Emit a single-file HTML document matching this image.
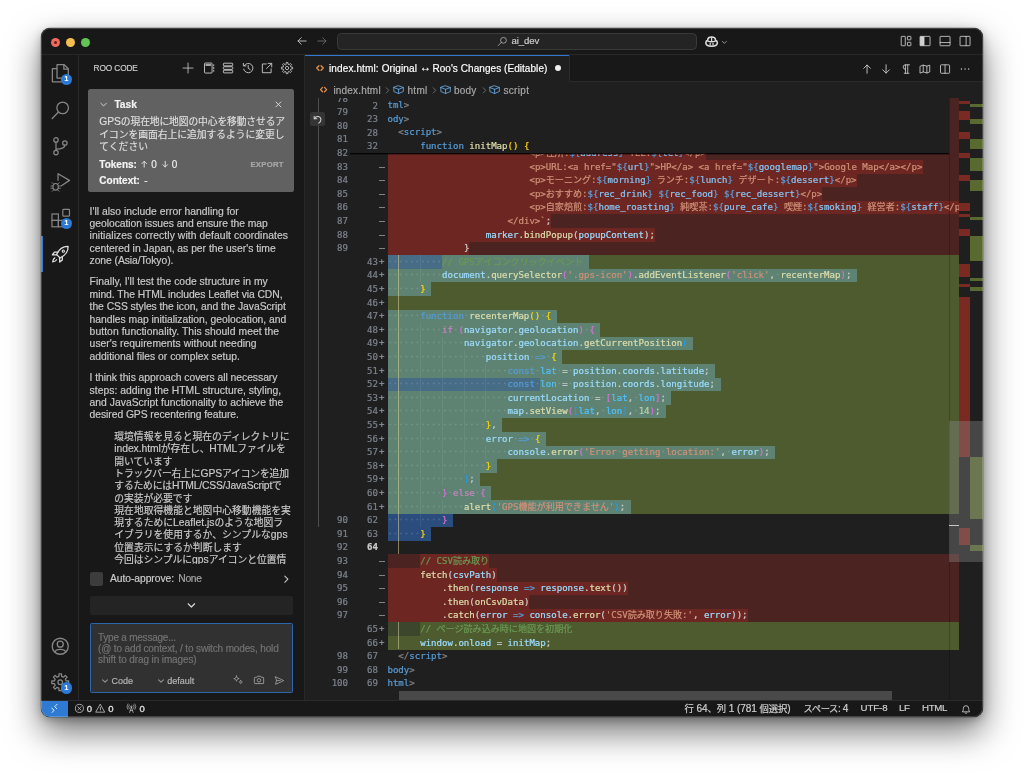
<!DOCTYPE html>
<html lang="ja"><head><meta charset="utf-8"><title>ai_dev</title>
<style>
html,body{margin:0;padding:0}
body{width:1024px;height:773px;overflow:hidden;background:#fff;position:relative;font-family:"Liberation Sans","Noto Sans CJK JP",sans-serif;color:#ccc}
#win{position:absolute;left:41px;top:28px;width:942px;height:689px;border-radius:9px;background:#1f1f1f;overflow:hidden;box-shadow:0 0 0 0.4px rgba(0,0,0,.35),0 15px 34px rgba(0,0,0,.55),0 3px 10px rgba(0,0,0,.25)}
#win::after{content:'';position:absolute;left:0;top:0;right:0;bottom:0;border-radius:9px;box-shadow:inset 0 0 0 1px rgba(255,255,255,.19);pointer-events:none;z-index:9}
#pg{position:absolute;left:-41px;top:-28px;width:1024px;height:773px;will-change:transform}
#pg div,#pg svg{position:absolute}
.t{white-space:pre}
.ui{font-family:"Liberation Sans","Noto Sans CJK JP",sans-serif;-webkit-text-stroke:0.18px}
.code{font-family:"DejaVu Sans Mono","Noto Sans CJK JP",monospace;font-size:9.07px;white-space:pre;line-height:13.6px;height:13.6px;color:#ccc;-webkit-text-stroke:0.22px}
.ln{font-family:"DejaVu Sans Mono",monospace;font-size:9.07px;line-height:13.6px;height:13.6px;color:#7b828c;text-align:right;white-space:pre;-webkit-text-stroke:0.22px}
svg{overflow:visible}
.ic{fill:none;stroke:#c5c5c5;stroke-width:1;stroke-linecap:round;stroke-linejoin:round}
</style></head><body>
<div id="win"><div id="pg">
<div style="left:41.00px;top:28.00px;width:942.00px;height:26.40px;background:#181818;"></div>
<div style="left:41.00px;top:54.20px;width:942.00px;height:0.80px;background:#282828;"></div>
<div style="left:41.00px;top:55.00px;width:37.00px;height:646.00px;background:#181818;"></div>
<div style="left:78.00px;top:55.00px;width:0.80px;height:646.00px;background:#282828;"></div>
<div style="left:78.80px;top:55.00px;width:225.20px;height:646.00px;background:#181818;"></div>
<div style="left:304.00px;top:55.00px;width:0.80px;height:646.00px;background:#282828;"></div>
<div style="left:304.80px;top:55.00px;width:678.20px;height:26.00px;background:#181818;"></div>
<div style="left:304.80px;top:80.80px;width:678.20px;height:0.80px;background:#2b2b2b;"></div>
<div style="left:304.80px;top:55.00px;width:264.50px;height:26.60px;background:#1f1f1f;"></div>
<div style="left:304.80px;top:54.90px;width:264.50px;height:1.10px;background:#2f79d0;"></div>
<div style="left:569.30px;top:55.00px;width:0.80px;height:26.00px;background:#2b2b2b;"></div>
<div id="ed" style="left:304.8px;top:98px;width:678.2px;height:602.6px;overflow:hidden;background:#1f1f1f"><div style="left:-304.8px;top:-98px;width:1024px;height:773px">
<div style="left:388.20px;top:91.90px;width:570.80px;height:13.70px;background:#4b2321;"></div>
<div style="left:388.20px;top:105.50px;width:570.80px;height:13.70px;background:#4b2321;"></div>
<div style="left:388.20px;top:119.10px;width:570.80px;height:13.70px;background:#4b2321;"></div>
<div style="left:388.20px;top:132.70px;width:570.80px;height:13.70px;background:#4b2321;"></div>
<div style="left:388.20px;top:146.30px;width:570.80px;height:13.70px;background:#4b2321;"></div>
<div style="left:388.20px;top:146.30px;width:317.77px;height:13.70px;background:#6d2621;"></div>
<div style="left:388.20px;top:159.90px;width:570.80px;height:13.70px;background:#4b2321;"></div>
<div style="left:388.20px;top:159.90px;width:534.50px;height:13.70px;background:#6d2621;"></div>
<div style="left:388.20px;top:173.50px;width:570.80px;height:13.70px;background:#4b2321;"></div>
<div style="left:388.20px;top:173.50px;width:468.56px;height:13.70px;background:#6d2621;"></div>
<div style="left:388.20px;top:187.10px;width:570.80px;height:13.70px;background:#4b2321;"></div>
<div style="left:388.20px;top:187.10px;width:434.23px;height:13.70px;background:#6d2621;"></div>
<div style="left:388.20px;top:200.70px;width:570.80px;height:13.70px;background:#4b2321;"></div>
<div style="left:388.20px;top:200.70px;width:570.80px;height:13.70px;background:#6d2621;"></div>
<div style="left:388.20px;top:214.30px;width:570.80px;height:13.70px;background:#4b2321;"></div>
<div style="left:388.20px;top:214.30px;width:163.08px;height:13.70px;background:#6d2621;"></div>
<div style="left:388.20px;top:227.90px;width:570.80px;height:13.70px;background:#4b2321;"></div>
<div style="left:388.20px;top:227.90px;width:266.86px;height:13.70px;background:#6d2621;"></div>
<div style="left:388.20px;top:241.50px;width:570.80px;height:13.70px;background:#4b2321;"></div>
<div style="left:388.20px;top:241.50px;width:81.15px;height:13.70px;background:#6d2621;"></div>
<div style="left:388.20px;top:255.10px;width:570.80px;height:13.70px;background:#4e5b2f;"></div>
<div style="left:388.20px;top:255.10px;width:200.92px;height:13.70px;background:#5e8372;"></div>
<div style="left:388.20px;top:255.10px;width:53.84px;height:13.70px;background:#466c86;"></div>
<div style="left:388.20px;top:268.70px;width:570.80px;height:13.70px;background:#4e5b2f;"></div>
<div style="left:388.20px;top:268.70px;width:468.96px;height:13.70px;background:#5e8372;"></div>
<div style="left:388.20px;top:282.30px;width:570.80px;height:13.70px;background:#4e5b2f;"></div>
<div style="left:388.20px;top:282.30px;width:42.92px;height:13.70px;background:#5e8372;"></div>
<div style="left:388.20px;top:295.90px;width:570.80px;height:13.70px;background:#4e5b2f;"></div>
<div style="left:388.20px;top:309.50px;width:570.80px;height:13.70px;background:#4e5b2f;"></div>
<div style="left:388.20px;top:309.50px;width:168.55px;height:13.70px;background:#5e8372;"></div>
<div style="left:388.20px;top:323.10px;width:570.80px;height:13.70px;background:#4e5b2f;"></div>
<div style="left:388.20px;top:323.10px;width:212.24px;height:13.70px;background:#5e8372;"></div>
<div style="left:388.20px;top:336.70px;width:570.80px;height:13.70px;background:#4e5b2f;"></div>
<div style="left:388.20px;top:336.70px;width:305.10px;height:13.70px;background:#5e8372;"></div>
<div style="left:388.20px;top:350.30px;width:570.80px;height:13.70px;background:#4e5b2f;"></div>
<div style="left:388.20px;top:350.30px;width:174.01px;height:13.70px;background:#5e8372;"></div>
<div style="left:388.20px;top:363.90px;width:570.80px;height:13.70px;background:#4e5b2f;"></div>
<div style="left:388.20px;top:363.90px;width:326.94px;height:13.70px;background:#5e8372;"></div>
<div style="left:388.20px;top:377.50px;width:570.80px;height:13.70px;background:#4e5b2f;"></div>
<div style="left:388.20px;top:377.50px;width:332.41px;height:13.70px;background:#5e8372;"></div>
<div style="left:388.20px;top:377.50px;width:152.16px;height:13.70px;background:#466c86;"></div>
<div style="left:388.20px;top:391.10px;width:570.80px;height:13.70px;background:#4e5b2f;"></div>
<div style="left:388.20px;top:391.10px;width:283.25px;height:13.70px;background:#5e8372;"></div>
<div style="left:388.20px;top:404.70px;width:570.80px;height:13.70px;background:#4e5b2f;"></div>
<div style="left:388.20px;top:404.70px;width:277.79px;height:13.70px;background:#5e8372;"></div>
<div style="left:388.20px;top:418.30px;width:570.80px;height:13.70px;background:#4e5b2f;"></div>
<div style="left:388.20px;top:418.30px;width:113.93px;height:13.70px;background:#5e8372;"></div>
<div style="left:388.20px;top:431.90px;width:570.80px;height:13.70px;background:#4e5b2f;"></div>
<div style="left:388.20px;top:431.90px;width:157.62px;height:13.70px;background:#5e8372;"></div>
<div style="left:388.20px;top:445.50px;width:570.80px;height:13.70px;background:#4e5b2f;"></div>
<div style="left:388.20px;top:445.50px;width:387.03px;height:13.70px;background:#5e8372;"></div>
<div style="left:388.20px;top:459.10px;width:570.80px;height:13.70px;background:#4e5b2f;"></div>
<div style="left:388.20px;top:459.10px;width:108.46px;height:13.70px;background:#5e8372;"></div>
<div style="left:388.20px;top:472.70px;width:570.80px;height:13.70px;background:#4e5b2f;"></div>
<div style="left:388.20px;top:472.70px;width:92.08px;height:13.70px;background:#5e8372;"></div>
<div style="left:388.20px;top:486.30px;width:570.80px;height:13.70px;background:#4e5b2f;"></div>
<div style="left:388.20px;top:486.30px;width:103.00px;height:13.70px;background:#5e8372;"></div>
<div style="left:388.20px;top:499.90px;width:570.80px;height:13.70px;background:#4e5b2f;"></div>
<div style="left:388.20px;top:499.90px;width:242.86px;height:13.70px;background:#5e8372;"></div>
<div style="left:388.20px;top:513.50px;width:64.77px;height:13.70px;background:#2a4d7e;"></div>
<div style="left:388.20px;top:527.10px;width:42.92px;height:13.70px;background:#2a4d7e;"></div>
<div style="left:388.20px;top:554.30px;width:570.80px;height:13.70px;background:#4b2321;"></div>
<div style="left:420.20px;top:554.30px;width:69.05px;height:13.70px;background:#6d2621;"></div>
<div style="left:388.20px;top:567.90px;width:570.80px;height:13.70px;background:#4b2321;"></div>
<div style="left:388.20px;top:567.90px;width:108.46px;height:13.70px;background:#6d2621;"></div>
<div style="left:388.20px;top:581.50px;width:570.80px;height:13.70px;background:#4b2321;"></div>
<div style="left:388.20px;top:581.50px;width:239.55px;height:13.70px;background:#6d2621;"></div>
<div style="left:388.20px;top:595.10px;width:570.80px;height:13.70px;background:#4b2321;"></div>
<div style="left:388.20px;top:595.10px;width:141.24px;height:13.70px;background:#6d2621;"></div>
<div style="left:388.20px;top:608.70px;width:570.80px;height:13.70px;background:#4b2321;"></div>
<div style="left:388.20px;top:608.70px;width:359.52px;height:13.70px;background:#6d2621;"></div>
<div style="left:388.20px;top:622.30px;width:570.80px;height:13.70px;background:#3b462c;"></div>
<div style="left:420.20px;top:622.30px;width:538.80px;height:13.70px;background:#4e5b2f;"></div>
<div style="left:388.20px;top:635.90px;width:570.80px;height:13.70px;background:#4e5b2f;"></div>
<div style="left:419.90px;top:255.10px;width:0.70px;height:13.60px;background:rgba(255,255,255,.07);"></div>
<div style="left:419.90px;top:268.70px;width:0.70px;height:13.60px;background:rgba(255,255,255,.07);"></div>
<div style="left:419.90px;top:323.10px;width:0.70px;height:13.60px;background:rgba(255,255,255,.07);"></div>
<div style="left:419.90px;top:336.70px;width:0.70px;height:13.60px;background:rgba(255,255,255,.07);"></div>
<div style="left:441.74px;top:336.70px;width:0.70px;height:13.60px;background:rgba(255,255,255,.07);"></div>
<div style="left:419.90px;top:350.30px;width:0.70px;height:13.60px;background:rgba(255,255,255,.07);"></div>
<div style="left:441.74px;top:350.30px;width:0.70px;height:13.60px;background:rgba(255,255,255,.07);"></div>
<div style="left:463.59px;top:350.30px;width:0.70px;height:13.60px;background:rgba(255,255,255,.07);"></div>
<div style="left:419.90px;top:363.90px;width:0.70px;height:13.60px;background:rgba(255,255,255,.07);"></div>
<div style="left:441.74px;top:363.90px;width:0.70px;height:13.60px;background:rgba(255,255,255,.07);"></div>
<div style="left:463.59px;top:363.90px;width:0.70px;height:13.60px;background:rgba(255,255,255,.07);"></div>
<div style="left:485.44px;top:363.90px;width:0.70px;height:13.60px;background:rgba(255,255,255,.07);"></div>
<div style="left:419.90px;top:377.50px;width:0.70px;height:13.60px;background:rgba(255,255,255,.07);"></div>
<div style="left:441.74px;top:377.50px;width:0.70px;height:13.60px;background:rgba(255,255,255,.07);"></div>
<div style="left:463.59px;top:377.50px;width:0.70px;height:13.60px;background:rgba(255,255,255,.07);"></div>
<div style="left:485.44px;top:377.50px;width:0.70px;height:13.60px;background:rgba(255,255,255,.07);"></div>
<div style="left:419.90px;top:391.10px;width:0.70px;height:13.60px;background:rgba(255,255,255,.07);"></div>
<div style="left:441.74px;top:391.10px;width:0.70px;height:13.60px;background:rgba(255,255,255,.07);"></div>
<div style="left:463.59px;top:391.10px;width:0.70px;height:13.60px;background:rgba(255,255,255,.07);"></div>
<div style="left:485.44px;top:391.10px;width:0.70px;height:13.60px;background:rgba(255,255,255,.07);"></div>
<div style="left:419.90px;top:404.70px;width:0.70px;height:13.60px;background:rgba(255,255,255,.07);"></div>
<div style="left:441.74px;top:404.70px;width:0.70px;height:13.60px;background:rgba(255,255,255,.07);"></div>
<div style="left:463.59px;top:404.70px;width:0.70px;height:13.60px;background:rgba(255,255,255,.07);"></div>
<div style="left:485.44px;top:404.70px;width:0.70px;height:13.60px;background:rgba(255,255,255,.07);"></div>
<div style="left:419.90px;top:418.30px;width:0.70px;height:13.60px;background:rgba(255,255,255,.07);"></div>
<div style="left:441.74px;top:418.30px;width:0.70px;height:13.60px;background:rgba(255,255,255,.07);"></div>
<div style="left:463.59px;top:418.30px;width:0.70px;height:13.60px;background:rgba(255,255,255,.07);"></div>
<div style="left:419.90px;top:431.90px;width:0.70px;height:13.60px;background:rgba(255,255,255,.07);"></div>
<div style="left:441.74px;top:431.90px;width:0.70px;height:13.60px;background:rgba(255,255,255,.07);"></div>
<div style="left:463.59px;top:431.90px;width:0.70px;height:13.60px;background:rgba(255,255,255,.07);"></div>
<div style="left:419.90px;top:445.50px;width:0.70px;height:13.60px;background:rgba(255,255,255,.07);"></div>
<div style="left:441.74px;top:445.50px;width:0.70px;height:13.60px;background:rgba(255,255,255,.07);"></div>
<div style="left:463.59px;top:445.50px;width:0.70px;height:13.60px;background:rgba(255,255,255,.07);"></div>
<div style="left:485.44px;top:445.50px;width:0.70px;height:13.60px;background:rgba(255,255,255,.07);"></div>
<div style="left:419.90px;top:459.10px;width:0.70px;height:13.60px;background:rgba(255,255,255,.07);"></div>
<div style="left:441.74px;top:459.10px;width:0.70px;height:13.60px;background:rgba(255,255,255,.07);"></div>
<div style="left:463.59px;top:459.10px;width:0.70px;height:13.60px;background:rgba(255,255,255,.07);"></div>
<div style="left:419.90px;top:472.70px;width:0.70px;height:13.60px;background:rgba(255,255,255,.07);"></div>
<div style="left:441.74px;top:472.70px;width:0.70px;height:13.60px;background:rgba(255,255,255,.07);"></div>
<div style="left:419.90px;top:486.30px;width:0.70px;height:13.60px;background:rgba(255,255,255,.07);"></div>
<div style="left:419.90px;top:499.90px;width:0.70px;height:13.60px;background:rgba(255,255,255,.07);"></div>
<div style="left:441.74px;top:499.90px;width:0.70px;height:13.60px;background:rgba(255,255,255,.07);"></div>
<div style="left:419.90px;top:513.50px;width:0.70px;height:13.60px;background:rgba(255,255,255,.07);"></div>
<div style="left:397.95px;top:255.10px;width:0.90px;height:299.20px;background:rgba(222,205,150,.55);"></div>
<div style="left:397.95px;top:622.30px;width:0.90px;height:27.20px;background:rgba(222,215,170,.5);"></div>
<div style="left:388.2px;top:98px;width:570.8px;height:602.6px;overflow:hidden"><div id="codetext" style="left:-388.2px;top:-98px;width:1024px;height:773px"><div class="code" style="left:529.44px;top:146.90px"><span style="color:#ce9178">&lt;p&gt;住所:</span><span style="color:#5b9fdc">${</span><span style="color:#86c3f2">address</span><span style="color:#5b9fdc">}</span><span style="color:#ce9178"> TEL:</span><span style="color:#5b9fdc">${</span><span style="color:#86c3f2">tel</span><span style="color:#5b9fdc">}</span><span style="color:#ce9178">&lt;/p&gt;</span></div>
<div class="code" style="left:529.44px;top:160.50px"><span style="color:#ce9178">&lt;p&gt;URL:&lt;a href="</span><span style="color:#5b9fdc">${</span><span style="color:#86c3f2">url</span><span style="color:#5b9fdc">}</span><span style="color:#ce9178">"&gt;HP&lt;/a&gt; &lt;a href="</span><span style="color:#5b9fdc">${</span><span style="color:#86c3f2">googlemap</span><span style="color:#5b9fdc">}</span><span style="color:#ce9178">"&gt;Google Map&lt;/a&gt;&lt;/p&gt;</span></div>
<div class="code" style="left:529.44px;top:174.10px"><span style="color:#ce9178">&lt;p&gt;モーニング:</span><span style="color:#5b9fdc">${</span><span style="color:#86c3f2">morning</span><span style="color:#5b9fdc">}</span><span style="color:#ce9178"> ランチ:</span><span style="color:#5b9fdc">${</span><span style="color:#86c3f2">lunch</span><span style="color:#5b9fdc">}</span><span style="color:#ce9178"> デザート:</span><span style="color:#5b9fdc">${</span><span style="color:#86c3f2">dessert</span><span style="color:#5b9fdc">}</span><span style="color:#ce9178">&lt;/p&gt;</span></div>
<div class="code" style="left:529.44px;top:187.70px"><span style="color:#ce9178">&lt;p&gt;おすすめ:</span><span style="color:#5b9fdc">${</span><span style="color:#86c3f2">rec_drink</span><span style="color:#5b9fdc">}</span><span style="color:#ce9178"> </span><span style="color:#5b9fdc">${</span><span style="color:#86c3f2">rec_food</span><span style="color:#5b9fdc">}</span><span style="color:#ce9178"> </span><span style="color:#5b9fdc">${</span><span style="color:#86c3f2">rec_dessert</span><span style="color:#5b9fdc">}</span><span style="color:#ce9178">&lt;/p&gt;</span></div>
<div class="code" style="left:529.44px;top:201.30px"><span style="color:#ce9178">&lt;p&gt;自家焙煎:</span><span style="color:#5b9fdc">${</span><span style="color:#86c3f2">home_roasting</span><span style="color:#5b9fdc">}</span><span style="color:#ce9178"> 純喫茶:</span><span style="color:#5b9fdc">${</span><span style="color:#86c3f2">pure_cafe</span><span style="color:#5b9fdc">}</span><span style="color:#ce9178"> 喫煙:</span><span style="color:#5b9fdc">${</span><span style="color:#86c3f2">smoking</span><span style="color:#5b9fdc">}</span><span style="color:#ce9178"> 経営者:</span><span style="color:#5b9fdc">${</span><span style="color:#86c3f2">staff</span><span style="color:#5b9fdc">}</span><span style="color:#ce9178">&lt;/p&gt;</span></div>
<div class="code" style="left:507.59px;top:214.90px"><span style="color:#ce9178">&lt;/div&gt;`</span><span style="color:#cccccc">;</span></div>
<div class="code" style="left:485.74px;top:228.50px"><span style="color:#9cdcfe">marker</span><span style="color:#cccccc">.</span><span style="color:#dcdcaa">bindPopup</span><span style="color:#cccccc">(</span><span style="color:#9cdcfe">popupContent</span><span style="color:#cccccc">)</span><span style="color:#cccccc">;</span></div>
<div class="code" style="left:463.89px;top:242.10px"><span style="color:#cccccc">}</span></div>
<div class="code" style="left:387.42px;top:255.70px;color:rgba(255,255,255,.15)">··········</div>
<div class="code" style="left:442.04px;top:255.70px"><span style="color:#6a9955">// GPSアイコンクリックイベント</span></div>
<div class="code" style="left:387.42px;top:269.30px;color:rgba(255,255,255,.15)">··········</div>
<div class="code" style="left:442.04px;top:269.30px"><span style="color:#9cdcfe">document</span><span style="color:#cccccc">.</span><span style="color:#dcdcaa">querySelector</span><span style="color:#da70d6">(</span><span style="color:#ce9178">'.gps-icon'</span><span style="color:#da70d6">)</span><span style="color:#cccccc">.</span><span style="color:#dcdcaa">addEventListener</span><span style="color:#da70d6">(</span><span style="color:#ce9178">'click'</span><span style="color:#cccccc">,</span><span style="color:rgba(255,255,255,.15)">·</span><span style="color:#dcdcaa">recenterMap</span><span style="color:#da70d6">)</span><span style="color:#cccccc">;</span></div>
<div class="code" style="left:387.42px;top:282.90px;color:rgba(255,255,255,.15)">······</div>
<div class="code" style="left:420.20px;top:282.90px"><span style="color:#ffd700">}</span></div>
<div class="code" style="left:387.42px;top:310.10px;color:rgba(255,255,255,.15)">······</div>
<div class="code" style="left:420.20px;top:310.10px"><span style="color:#569cd6">function</span><span style="color:rgba(255,255,255,.15)">·</span><span style="color:#dcdcaa">recenterMap</span><span style="color:#ffd700">()</span><span style="color:rgba(255,255,255,.15)">·</span><span style="color:#ffd700">{</span></div>
<div class="code" style="left:387.42px;top:323.70px;color:rgba(255,255,255,.15)">··········</div>
<div class="code" style="left:442.04px;top:323.70px"><span style="color:#c586c0">if</span><span style="color:rgba(255,255,255,.15)">·</span><span style="color:#da70d6">(</span><span style="color:#9cdcfe">navigator</span><span style="color:#cccccc">.</span><span style="color:#9cdcfe">geolocation</span><span style="color:#da70d6">)</span><span style="color:rgba(255,255,255,.15)">·</span><span style="color:#da70d6">{</span></div>
<div class="code" style="left:387.42px;top:337.30px;color:rgba(255,255,255,.15)">··············</div>
<div class="code" style="left:463.89px;top:337.30px"><span style="color:#9cdcfe">navigator</span><span style="color:#cccccc">.</span><span style="color:#9cdcfe">geolocation</span><span style="color:#cccccc">.</span><span style="color:#dcdcaa">getCurrentPosition</span><span style="color:#179fff">(</span></div>
<div class="code" style="left:387.42px;top:350.90px;color:rgba(255,255,255,.15)">··················</div>
<div class="code" style="left:485.74px;top:350.90px"><span style="color:#9cdcfe">position</span><span style="color:rgba(255,255,255,.15)">·</span><span style="color:#569cd6">=&gt;</span><span style="color:rgba(255,255,255,.15)">·</span><span style="color:#ffd700">{</span></div>
<div class="code" style="left:387.42px;top:364.50px;color:rgba(255,255,255,.15)">······················</div>
<div class="code" style="left:507.59px;top:364.50px"><span style="color:#569cd6">const</span><span style="color:rgba(255,255,255,.15)">·</span><span style="color:#4fc1ff">lat</span><span style="color:rgba(255,255,255,.15)">·</span><span style="color:#cccccc">=</span><span style="color:rgba(255,255,255,.15)">·</span><span style="color:#9cdcfe">position</span><span style="color:#cccccc">.</span><span style="color:#9cdcfe">coords</span><span style="color:#cccccc">.</span><span style="color:#9cdcfe">latitude</span><span style="color:#cccccc">;</span></div>
<div class="code" style="left:387.42px;top:378.10px;color:rgba(255,255,255,.15)">······················</div>
<div class="code" style="left:507.59px;top:378.10px"><span style="color:#569cd6">const</span><span style="color:rgba(255,255,255,.15)">·</span><span style="color:#4fc1ff">lon</span><span style="color:rgba(255,255,255,.15)">·</span><span style="color:#cccccc">=</span><span style="color:rgba(255,255,255,.15)">·</span><span style="color:#9cdcfe">position</span><span style="color:#cccccc">.</span><span style="color:#9cdcfe">coords</span><span style="color:#cccccc">.</span><span style="color:#9cdcfe">longitude</span><span style="color:#cccccc">;</span></div>
<div class="code" style="left:387.42px;top:391.70px;color:rgba(255,255,255,.15)">······················</div>
<div class="code" style="left:507.59px;top:391.70px"><span style="color:#9cdcfe">currentLocation</span><span style="color:rgba(255,255,255,.15)">·</span><span style="color:#cccccc">=</span><span style="color:rgba(255,255,255,.15)">·</span><span style="color:#da70d6">[</span><span style="color:#4fc1ff">lat</span><span style="color:#cccccc">,</span><span style="color:rgba(255,255,255,.15)">·</span><span style="color:#4fc1ff">lon</span><span style="color:#da70d6">]</span><span style="color:#cccccc">;</span></div>
<div class="code" style="left:387.42px;top:405.30px;color:rgba(255,255,255,.15)">······················</div>
<div class="code" style="left:507.59px;top:405.30px"><span style="color:#9cdcfe">map</span><span style="color:#cccccc">.</span><span style="color:#dcdcaa">setView</span><span style="color:#da70d6">(</span><span style="color:#179fff">[</span><span style="color:#4fc1ff">lat</span><span style="color:#cccccc">,</span><span style="color:rgba(255,255,255,.15)">·</span><span style="color:#4fc1ff">lon</span><span style="color:#179fff">]</span><span style="color:#cccccc">,</span><span style="color:rgba(255,255,255,.15)">·</span><span style="color:#b5cea8">14</span><span style="color:#da70d6">)</span><span style="color:#cccccc">;</span></div>
<div class="code" style="left:387.42px;top:418.90px;color:rgba(255,255,255,.15)">··················</div>
<div class="code" style="left:485.74px;top:418.90px"><span style="color:#ffd700">}</span><span style="color:#cccccc">,</span></div>
<div class="code" style="left:387.42px;top:432.50px;color:rgba(255,255,255,.15)">··················</div>
<div class="code" style="left:485.74px;top:432.50px"><span style="color:#9cdcfe">error</span><span style="color:rgba(255,255,255,.15)">·</span><span style="color:#569cd6">=&gt;</span><span style="color:rgba(255,255,255,.15)">·</span><span style="color:#ffd700">{</span></div>
<div class="code" style="left:387.42px;top:446.10px;color:rgba(255,255,255,.15)">······················</div>
<div class="code" style="left:507.59px;top:446.10px"><span style="color:#9cdcfe">console</span><span style="color:#cccccc">.</span><span style="color:#dcdcaa">error</span><span style="color:#da70d6">(</span><span style="color:#ce9178">'Error<span style="color:rgba(255,255,255,.15)">·</span>getting<span style="color:rgba(255,255,255,.15)">·</span>location:'</span><span style="color:#cccccc">,</span><span style="color:rgba(255,255,255,.15)">·</span><span style="color:#9cdcfe">error</span><span style="color:#da70d6">)</span><span style="color:#cccccc">;</span></div>
<div class="code" style="left:387.42px;top:459.70px;color:rgba(255,255,255,.15)">··················</div>
<div class="code" style="left:485.74px;top:459.70px"><span style="color:#ffd700">}</span></div>
<div class="code" style="left:387.42px;top:473.30px;color:rgba(255,255,255,.15)">··············</div>
<div class="code" style="left:463.89px;top:473.30px"><span style="color:#179fff">)</span><span style="color:#cccccc">;</span></div>
<div class="code" style="left:387.42px;top:486.90px;color:rgba(255,255,255,.15)">··········</div>
<div class="code" style="left:442.04px;top:486.90px"><span style="color:#da70d6">}</span><span style="color:rgba(255,255,255,.15)">·</span><span style="color:#c586c0">else</span><span style="color:rgba(255,255,255,.15)">·</span><span style="color:#da70d6">{</span></div>
<div class="code" style="left:387.42px;top:500.50px;color:rgba(255,255,255,.15)">··············</div>
<div class="code" style="left:463.89px;top:500.50px"><span style="color:#dcdcaa">alert</span><span style="color:#179fff">(</span><span style="color:#ce9178">'GPS機能が利用できません'</span><span style="color:#179fff">)</span><span style="color:#cccccc">;</span></div>
<div class="code" style="left:387.42px;top:514.10px;color:rgba(255,255,255,.15)">··········</div>
<div class="code" style="left:442.04px;top:514.10px"><span style="color:#da70d6">}</span></div>
<div class="code" style="left:387.42px;top:527.70px;color:rgba(255,255,255,.15)">······</div>
<div class="code" style="left:420.20px;top:527.70px"><span style="color:#ffd700">}</span></div>
<div class="code" style="left:420.20px;top:554.90px"><span style="color:#6a9955">// CSV読み取り</span></div>
<div class="code" style="left:420.20px;top:568.50px"><span style="color:#dcdcaa">fetch</span><span style="color:#cccccc">(</span><span style="color:#9cdcfe">csvPath</span><span style="color:#cccccc">)</span></div>
<div class="code" style="left:442.04px;top:582.10px"><span style="color:#cccccc">.</span><span style="color:#dcdcaa">then</span><span style="color:#cccccc">(</span><span style="color:#9cdcfe">response</span><span style="color:#cccccc"> </span><span style="color:#569cd6">=&gt;</span><span style="color:#cccccc"> </span><span style="color:#9cdcfe">response</span><span style="color:#cccccc">.</span><span style="color:#dcdcaa">text</span><span style="color:#cccccc">()</span><span style="color:#cccccc">)</span></div>
<div class="code" style="left:442.04px;top:595.70px"><span style="color:#cccccc">.</span><span style="color:#dcdcaa">then</span><span style="color:#cccccc">(</span><span style="color:#dcdcaa">onCsvData</span><span style="color:#cccccc">)</span></div>
<div class="code" style="left:442.04px;top:609.30px"><span style="color:#cccccc">.</span><span style="color:#dcdcaa">catch</span><span style="color:#cccccc">(</span><span style="color:#9cdcfe">error</span><span style="color:#cccccc"> </span><span style="color:#569cd6">=&gt;</span><span style="color:#cccccc"> </span><span style="color:#9cdcfe">console</span><span style="color:#cccccc">.</span><span style="color:#dcdcaa">error</span><span style="color:#cccccc">(</span><span style="color:#ce9178">'CSV読み取り失敗:'</span><span style="color:#cccccc">,</span><span style="color:#cccccc"> </span><span style="color:#9cdcfe">error</span><span style="color:#cccccc">)</span><span style="color:#cccccc">)</span><span style="color:#cccccc">;</span></div>
<div class="code" style="left:420.20px;top:622.90px"><span style="color:#6a9955">// ページ読み込み時に地図を初期化</span></div>
<div class="code" style="left:420.20px;top:636.50px"><span style="color:#9cdcfe">window</span><span style="color:#cccccc">.</span><span style="color:#9cdcfe">onload</span><span style="color:#cccccc"> </span><span style="color:#cccccc">=</span><span style="color:#cccccc"> </span><span style="color:#9cdcfe">initMap</span><span style="color:#cccccc">;</span></div>
<div class="code" style="left:398.35px;top:650.10px"><span style="color:#808080">&lt;/</span><span style="color:#569cd6">script</span><span style="color:#808080">&gt;</span></div>
<div class="code" style="left:376.50px;top:663.70px"><span style="color:#808080">&lt;/</span><span style="color:#569cd6">body</span><span style="color:#808080">&gt;</span></div>
<div class="code" style="left:376.50px;top:677.30px"><span style="color:#808080">&lt;/</span><span style="color:#569cd6">html</span><span style="color:#808080">&gt;</span></div>
</div></div><div class="ln" style="left:320px;width:28px;top:92.50px">78</div>
<div class="ln" style="left:320px;width:28px;top:106.10px">79</div>
<div class="ln" style="left:320px;width:28px;top:119.70px">80</div>
<div class="ln" style="left:320px;width:28px;top:133.30px">81</div>
<div class="ln" style="left:320px;width:28px;top:146.90px">82</div>
<div class="ln" style="left:320px;width:28px;top:160.50px">83</div>
<div style="left:379.30px;top:166.60px;width:6.20px;height:0.80px;background:#7d848c;"></div>
<div class="ln" style="left:320px;width:28px;top:174.10px">84</div>
<div style="left:379.30px;top:180.20px;width:6.20px;height:0.80px;background:#7d848c;"></div>
<div class="ln" style="left:320px;width:28px;top:187.70px">85</div>
<div style="left:379.30px;top:193.80px;width:6.20px;height:0.80px;background:#7d848c;"></div>
<div class="ln" style="left:320px;width:28px;top:201.30px">86</div>
<div style="left:379.30px;top:207.40px;width:6.20px;height:0.80px;background:#7d848c;"></div>
<div class="ln" style="left:320px;width:28px;top:214.90px">87</div>
<div style="left:379.30px;top:221.00px;width:6.20px;height:0.80px;background:#7d848c;"></div>
<div class="ln" style="left:320px;width:28px;top:228.50px">88</div>
<div style="left:379.30px;top:234.60px;width:6.20px;height:0.80px;background:#7d848c;"></div>
<div class="ln" style="left:320px;width:28px;top:242.10px">89</div>
<div style="left:379.30px;top:248.20px;width:6.20px;height:0.80px;background:#7d848c;"></div>
<div class="ln" style="left:350px;width:28px;top:255.70px;">43</div>
<div class="ln" style="left:379px;width:8px;top:255.70px;text-align:left;color:#8b949e">+</div>
<div class="ln" style="left:350px;width:28px;top:269.30px;">44</div>
<div class="ln" style="left:379px;width:8px;top:269.30px;text-align:left;color:#8b949e">+</div>
<div class="ln" style="left:350px;width:28px;top:282.90px;">45</div>
<div class="ln" style="left:379px;width:8px;top:282.90px;text-align:left;color:#8b949e">+</div>
<div class="ln" style="left:350px;width:28px;top:296.50px;">46</div>
<div class="ln" style="left:379px;width:8px;top:296.50px;text-align:left;color:#8b949e">+</div>
<div class="ln" style="left:350px;width:28px;top:310.10px;">47</div>
<div class="ln" style="left:379px;width:8px;top:310.10px;text-align:left;color:#8b949e">+</div>
<div class="ln" style="left:350px;width:28px;top:323.70px;">48</div>
<div class="ln" style="left:379px;width:8px;top:323.70px;text-align:left;color:#8b949e">+</div>
<div class="ln" style="left:350px;width:28px;top:337.30px;">49</div>
<div class="ln" style="left:379px;width:8px;top:337.30px;text-align:left;color:#8b949e">+</div>
<div class="ln" style="left:350px;width:28px;top:350.90px;">50</div>
<div class="ln" style="left:379px;width:8px;top:350.90px;text-align:left;color:#8b949e">+</div>
<div class="ln" style="left:350px;width:28px;top:364.50px;">51</div>
<div class="ln" style="left:379px;width:8px;top:364.50px;text-align:left;color:#8b949e">+</div>
<div class="ln" style="left:350px;width:28px;top:378.10px;">52</div>
<div class="ln" style="left:379px;width:8px;top:378.10px;text-align:left;color:#8b949e">+</div>
<div class="ln" style="left:350px;width:28px;top:391.70px;">53</div>
<div class="ln" style="left:379px;width:8px;top:391.70px;text-align:left;color:#8b949e">+</div>
<div class="ln" style="left:350px;width:28px;top:405.30px;">54</div>
<div class="ln" style="left:379px;width:8px;top:405.30px;text-align:left;color:#8b949e">+</div>
<div class="ln" style="left:350px;width:28px;top:418.90px;">55</div>
<div class="ln" style="left:379px;width:8px;top:418.90px;text-align:left;color:#8b949e">+</div>
<div class="ln" style="left:350px;width:28px;top:432.50px;">56</div>
<div class="ln" style="left:379px;width:8px;top:432.50px;text-align:left;color:#8b949e">+</div>
<div class="ln" style="left:350px;width:28px;top:446.10px;">57</div>
<div class="ln" style="left:379px;width:8px;top:446.10px;text-align:left;color:#8b949e">+</div>
<div class="ln" style="left:350px;width:28px;top:459.70px;">58</div>
<div class="ln" style="left:379px;width:8px;top:459.70px;text-align:left;color:#8b949e">+</div>
<div class="ln" style="left:350px;width:28px;top:473.30px;">59</div>
<div class="ln" style="left:379px;width:8px;top:473.30px;text-align:left;color:#8b949e">+</div>
<div class="ln" style="left:350px;width:28px;top:486.90px;">60</div>
<div class="ln" style="left:379px;width:8px;top:486.90px;text-align:left;color:#8b949e">+</div>
<div class="ln" style="left:350px;width:28px;top:500.50px;">61</div>
<div class="ln" style="left:379px;width:8px;top:500.50px;text-align:left;color:#8b949e">+</div>
<div class="ln" style="left:320px;width:28px;top:514.10px">90</div>
<div class="ln" style="left:350px;width:28px;top:514.10px;">62</div>
<div class="ln" style="left:320px;width:28px;top:527.70px">91</div>
<div class="ln" style="left:350px;width:28px;top:527.70px;">63</div>
<div class="ln" style="left:320px;width:28px;top:541.30px">92</div>
<div class="ln" style="left:350px;width:28px;top:541.30px;color:#cccccc;font-weight:bold;">64</div>
<div class="ln" style="left:320px;width:28px;top:554.90px">93</div>
<div style="left:379.30px;top:561.00px;width:6.20px;height:0.80px;background:#7d848c;"></div>
<div class="ln" style="left:320px;width:28px;top:568.50px">94</div>
<div style="left:379.30px;top:574.60px;width:6.20px;height:0.80px;background:#7d848c;"></div>
<div class="ln" style="left:320px;width:28px;top:582.10px">95</div>
<div style="left:379.30px;top:588.20px;width:6.20px;height:0.80px;background:#7d848c;"></div>
<div class="ln" style="left:320px;width:28px;top:595.70px">96</div>
<div style="left:379.30px;top:601.80px;width:6.20px;height:0.80px;background:#7d848c;"></div>
<div class="ln" style="left:320px;width:28px;top:609.30px">97</div>
<div style="left:379.30px;top:615.40px;width:6.20px;height:0.80px;background:#7d848c;"></div>
<div class="ln" style="left:350px;width:28px;top:622.90px;">65</div>
<div class="ln" style="left:379px;width:8px;top:622.90px;text-align:left;color:#8b949e">+</div>
<div class="ln" style="left:350px;width:28px;top:636.50px;">66</div>
<div class="ln" style="left:379px;width:8px;top:636.50px;text-align:left;color:#8b949e">+</div>
<div class="ln" style="left:320px;width:28px;top:650.10px">98</div>
<div class="ln" style="left:350px;width:28px;top:650.10px;">67</div>
<div class="ln" style="left:320px;width:28px;top:663.70px">99</div>
<div class="ln" style="left:350px;width:28px;top:663.70px;">68</div>
<div class="ln" style="left:320px;width:28px;top:677.30px">100</div>
<div class="ln" style="left:350px;width:28px;top:677.30px;">69</div>
<div style="left:317.90px;top:98.00px;width:0.90px;height:429.10px;background:#4d4d4d;"></div>
<div style="left:310.30px;top:112.10px;width:14.60px;height:14.20px;background:#353535;border-radius:2.5px"></div>
<svg style="left:312.20px;top:113.80px;" width="10.80" height="10.80" viewBox="0 0 16 16"><path d="M3.2 3.2v4h4" fill="none" stroke="#d0d0d0" stroke-width="1.5" stroke-linecap="round" stroke-linejoin="round"/><path d="M3.6 6.9c1.2-2.2 3.4-3.4 5.6-3.1 2.4.4 4 2.4 4 4.6 0 2-1.2 3.7-3.2 5.2" fill="none" stroke="#d0d0d0" stroke-width="1.5" stroke-linecap="round"/></svg>
<div style="left:349.80px;top:98.00px;width:599.20px;height:54.60px;background:#1f1f1f;"></div>
<div style="left:349.80px;top:152.50px;width:599.20px;height:1.50px;background:rgba(0,0,0,.88);"></div>
<div style="left:349.80px;top:154.00px;width:599.20px;height:1.20px;background:rgba(0,0,0,.3);"></div>
<div style="left:388.2px;top:98px;width:560.8px;height:54.6px;overflow:hidden"><div style="left:-388.2px;top:-98px;width:1024px;height:300px"><div class="code" style="left:376.50px;top:99.10px"><span style="color:#808080">&lt;</span><span style="color:#569cd6">html</span><span style="color:#808080">&gt;</span></div>
<div class="code" style="left:376.50px;top:112.70px"><span style="color:#808080">&lt;</span><span style="color:#569cd6">body</span><span style="color:#808080">&gt;</span></div>
<div class="code" style="left:398.35px;top:126.30px"><span style="color:#808080">&lt;</span><span style="color:#569cd6">script</span><span style="color:#808080">&gt;</span></div>
<div class="code" style="left:420.20px;top:139.90px"><span style="color:#569cd6">function</span><span style="color:#cccccc"> </span><span style="color:#dcdcaa">initMap</span><span style="color:#ffd700">()</span><span style="color:#cccccc"> </span><span style="color:#ffd700">{</span></div>
</div></div><div class="ln" style="left:350px;width:28px;top:99.60px">2</div>
<div class="ln" style="left:350px;width:28px;top:113.20px">23</div>
<div class="ln" style="left:350px;width:28px;top:126.80px">28</div>
<div class="ln" style="left:350px;width:28px;top:140.40px">32</div>
<div style="left:948.60px;top:98.00px;width:0.80px;height:602.60px;background:rgba(0,0,0,.22);"></div>
<div style="left:959.10px;top:98.00px;width:23.90px;height:602.60px;background:#1f1f1f;"></div>
<div style="left:959.10px;top:100.80px;width:11.30px;height:3.50px;background:#7a2a22;"></div>
<div style="left:959.10px;top:111.20px;width:11.30px;height:8.40px;background:#7a2a22;"></div>
<div style="left:959.10px;top:132.30px;width:11.30px;height:6.70px;background:#7a2a22;"></div>
<div style="left:959.10px;top:152.60px;width:11.30px;height:5.80px;background:#7a2a22;"></div>
<div style="left:959.10px;top:175.00px;width:11.30px;height:6.00px;background:#7a2a22;"></div>
<div style="left:959.10px;top:202.90px;width:11.30px;height:8.00px;background:#7a2a22;"></div>
<div style="left:959.10px;top:213.50px;width:11.30px;height:3.20px;background:#7a2a22;"></div>
<div style="left:959.10px;top:229.00px;width:11.30px;height:6.70px;background:#7a2a22;"></div>
<div style="left:959.10px;top:264.20px;width:11.30px;height:13.20px;background:#7a2a22;"></div>
<div style="left:959.10px;top:284.30px;width:11.30px;height:3.00px;background:#7a2a22;"></div>
<div style="left:959.10px;top:296.70px;width:11.30px;height:160.80px;background:#7a2a22;"></div>
<div style="left:959.10px;top:528.00px;width:11.30px;height:16.70px;background:#7a2a22;"></div>
<div style="left:970.40px;top:103.80px;width:12.60px;height:3.50px;background:#59692f;"></div>
<div style="left:970.40px;top:118.90px;width:12.60px;height:4.80px;background:#59692f;"></div>
<div style="left:970.40px;top:139.00px;width:12.60px;height:10.00px;background:#59692f;"></div>
<div style="left:970.40px;top:158.10px;width:12.60px;height:13.20px;background:#59692f;"></div>
<div style="left:970.40px;top:180.40px;width:12.60px;height:10.50px;background:#59692f;"></div>
<div style="left:970.40px;top:216.70px;width:12.60px;height:3.00px;background:#59692f;"></div>
<div style="left:970.40px;top:236.10px;width:12.60px;height:25.20px;background:#59692f;"></div>
<div style="left:970.40px;top:277.60px;width:12.60px;height:3.20px;background:#59692f;"></div>
<div style="left:970.40px;top:287.30px;width:12.60px;height:3.50px;background:#59692f;"></div>
<div style="left:970.40px;top:457.30px;width:12.60px;height:61.70px;background:#59692f;"></div>
<div style="left:970.40px;top:544.70px;width:12.60px;height:6.00px;background:#59692f;"></div>
<div style="left:948.80px;top:421.40px;width:34.20px;height:141.00px;background:rgba(140,140,140,.36);"></div>
<div style="left:949.20px;top:524.60px;width:9.80px;height:0.90px;background:#c8c8c8;"></div>
<div style="left:399.00px;top:691.40px;width:493.00px;height:9.20px;background:#494949;"></div>
</div></div>
<svg style="left:49.65px;top:63.25px;" width="20.50" height="20.50" viewBox="0 0 24 24"><path d="M8.2 2h8.4l4.8 4.8V17.6H8.2Z" fill="none" stroke="#868686" stroke-width="1.5" stroke-linecap="round" stroke-linejoin="round" /><path d="M16.2 2.2V7.2h5" fill="none" stroke="#868686" stroke-width="1.5" stroke-linecap="round" stroke-linejoin="round" /><path d="M8 6.6H2.8V22H14.6V17.8" fill="none" stroke="#868686" stroke-width="1.5" stroke-linecap="round" stroke-linejoin="round" /></svg>
<div style="left:60.70px;top:73.50px;width:11.40px;height:11.40px;background:#2c7ad6;border-radius:50%"></div>
<div class="t ui" style="top:74.88px;font-size:6.8px;line-height:8.84px;color:#fff;font-weight:700;left:60.70px;width:11.4px;text-align:center;">1</div>
<svg style="left:49.65px;top:99.55px;" width="20.50" height="20.50" viewBox="0 0 24 24"><circle cx="14.8" cy="9.2" r="6.8" fill="none" stroke="#868686" stroke-width="1.5"/><path d="M10 14L2.6 21.6" fill="none" stroke="#868686" stroke-width="1.5" stroke-linecap="round" stroke-linejoin="round" /></svg>
<svg style="left:49.65px;top:135.95px;" width="20.50" height="20.50" viewBox="0 0 24 24"><circle cx="7" cy="4.6" r="2.6" fill="none" stroke="#868686" stroke-width="1.45"/><circle cx="7" cy="19.4" r="2.6" fill="none" stroke="#868686" stroke-width="1.45"/><circle cx="17.4" cy="8.2" r="2.6" fill="none" stroke="#868686" stroke-width="1.45"/><path d="M7 7.2v9.6M17.4 10.8c0 3.4-3.4 4.4-10.2 4.6" fill="none" stroke="#868686" stroke-width="1.45" stroke-linecap="round" stroke-linejoin="round" /></svg>
<svg style="left:49.65px;top:172.15px;" width="20.50" height="20.50" viewBox="0 0 24 24"><path d="M9.4 9.6V2L22.8 9.8 13.4 16.2" fill="none" stroke="#868686" stroke-width="1.45" stroke-linecap="round" stroke-linejoin="round" /><ellipse cx="6.6" cy="17.4" rx="3.1" ry="3.9" fill="none" stroke="#868686" stroke-width="1.35"/><path d="M3.5 16.4H1M3.5 19H1M9.7 16.4h2.5M9.7 19h2.5M4.2 14.2L2.4 12.4M9 14.2l1.8-1.8M4.4 20.8L2.6 22.6M8.8 20.8l1.8 1.8" fill="none" stroke="#868686" stroke-width="1.05" stroke-linecap="round" stroke-linejoin="round" /></svg>
<svg style="left:49.65px;top:207.95px;" width="20.50" height="20.50" viewBox="0 0 24 24"><rect x="2.3" y="7" width="7.5" height="7.5" rx="0" fill="none" stroke="#868686" stroke-width="1.4"/><rect x="2.3" y="14.5" width="7.5" height="7.5" rx="0" fill="none" stroke="#868686" stroke-width="1.4"/><rect x="9.8" y="14.5" width="7.5" height="7.5" rx="0" fill="none" stroke="#868686" stroke-width="1.4"/><rect x="15" y="1.7" width="7.8" height="7.8" rx="0.6" fill="none" stroke="#868686" stroke-width="1.4"/></svg>
<div style="left:60.70px;top:217.70px;width:11.40px;height:11.40px;background:#2c7ad6;border-radius:50%"></div>
<div class="t ui" style="top:219.08px;font-size:6.8px;line-height:8.84px;color:#fff;font-weight:700;left:60.70px;width:11.4px;text-align:center;">1</div>
<div style="left:41.00px;top:235.80px;width:2.20px;height:36.30px;background:#3a79c8;"></div>
<svg style="left:49.65px;top:244.15px;" width="20.50" height="20.50" viewBox="0 0 24 24"><path d="M21.2 2.8C15.4 2.6 10.6 6 7.6 12.2L11.8 16.4C18 13.4 21.4 8.6 21.2 2.8Z" fill="none" stroke="#e0e0e0" stroke-width="1.5" stroke-linecap="round" stroke-linejoin="round" /><path d="M9.2 9.6H5.2L2.8 12.6l4.8.2M14.4 14.8v4L11.4 21.2l-.2-4.8" fill="none" stroke="#e0e0e0" stroke-width="1.5" stroke-linecap="round" stroke-linejoin="round" /><path d="M5.6 16.2C4.2 17 3.4 18.8 3.2 20.8 5.2 20.6 7 19.8 7.8 18.4" fill="none" stroke="#e0e0e0" stroke-width="1.5" stroke-linecap="round" stroke-linejoin="round" /><circle cx="15.6" cy="8.4" r="1.3" fill="none" stroke="#e0e0e0" stroke-width="1.3"/></svg>
<svg style="left:49.65px;top:635.75px;" width="20.50" height="20.50" viewBox="0 0 24 24"><circle cx="12" cy="12" r="9.4" fill="none" stroke="#868686" stroke-width="1.55"/><circle cx="12" cy="9.6" r="3.5" fill="none" stroke="#868686" stroke-width="1.55"/><path d="M5.6 18.6C7.2 14.6 16.8 14.6 18.4 18.6" fill="none" stroke="#868686" stroke-width="1.55" stroke-linecap="round" stroke-linejoin="round" /></svg>
<svg style="left:49.65px;top:672.05px;" width="20.50" height="20.50" viewBox="0 0 24 24"><path d="M10.42 5.18 L10.52 2.11 L13.48 2.11 L13.58 5.18 L15.70 6.06 L17.95 3.96 L20.04 6.05 L17.94 8.30 L18.82 10.42 L21.89 10.52 L21.89 13.48 L18.82 13.58 L17.94 15.70 L20.04 17.95 L17.95 20.04 L15.70 17.94 L13.58 18.82 L13.48 21.89 L10.52 21.89 L10.42 18.82 L8.30 17.94 L6.05 20.04 L3.96 17.95 L6.06 15.70 L5.18 13.58 L2.11 13.48 L2.11 10.52 L5.18 10.42 L6.06 8.30 L3.96 6.05 L6.05 3.96 L8.30 6.06Z" fill="none" stroke="#868686" stroke-width="1.5" stroke-linecap="round" stroke-linejoin="round" /><circle cx="12" cy="12" r="2.7" fill="none" stroke="#868686" stroke-width="1.5"/></svg>
<div style="left:60.80px;top:682.20px;width:11.40px;height:11.40px;background:#2c7ad6;border-radius:50%"></div>
<div class="t ui" style="top:683.58px;font-size:6.8px;line-height:8.84px;color:#fff;font-weight:700;left:60.80px;width:11.4px;text-align:center;">1</div>
<div class="t ui" style="top:63.20px;font-size:8.3px;line-height:10.79px;color:#cccccc;letter-spacing:-0.123px;left:93.60px;">ROO CODE</div>
<svg style="left:182.45px;top:62.35px;" width="12.10" height="12.10" viewBox="0 0 16 16"><path d="M8 1.4v13.2M1.4 8h13.2" fill="none" stroke="#d2d2d2" stroke-width="1.05" stroke-linecap="round" stroke-linejoin="round" /></svg>
<svg style="left:202.65px;top:62.35px;" width="12.10" height="12.10" viewBox="0 0 16 16"><rect x="2" y="1.4" width="10" height="13.2" rx="0.8" fill="none" stroke="#d2d2d2" stroke-width="1.15"/><path d="M4 4h6" fill="none" stroke="#d2d2d2" stroke-width="1.8" stroke-linecap="round" stroke-linejoin="round" /><path d="M14.2 3.6v1.6M14.2 7.2v1.6M14.2 10.8v1.6" fill="none" stroke="#d2d2d2" stroke-width="1.15" stroke-linecap="round" stroke-linejoin="round" /></svg>
<svg style="left:222.05px;top:62.35px;" width="12.10" height="12.10" viewBox="0 0 16 16"><rect x="1.8" y="1.6" width="12.4" height="3.5" rx="0.9" fill="none" stroke="#d2d2d2" stroke-width="1.15"/><rect x="1.8" y="6.25" width="12.4" height="3.5" rx="0.9" fill="none" stroke="#d2d2d2" stroke-width="1.15"/><rect x="1.8" y="10.9" width="12.4" height="3.5" rx="0.9" fill="none" stroke="#d2d2d2" stroke-width="1.15"/></svg>
<svg style="left:241.65px;top:62.35px;" width="12.10" height="12.10" viewBox="0 0 16 16"><path d="M2.9 4.9A6.2 6.2 0 1 1 2.2 9.4" fill="none" stroke="#d2d2d2" stroke-width="1.15" stroke-linecap="round" stroke-linejoin="round" /><path d="M1.8 1.8v3.4h3.4" fill="none" stroke="#d2d2d2" stroke-width="1.15" stroke-linecap="round" stroke-linejoin="round" /><path d="M8.2 4.6v3.8l2.6 1.6" fill="none" stroke="#d2d2d2" stroke-width="1.15" stroke-linecap="round" stroke-linejoin="round" /></svg>
<svg style="left:261.35px;top:62.35px;" width="12.10" height="12.10" viewBox="0 0 16 16"><path d="M7 2.6H1.8v11.6H13.4V9" fill="none" stroke="#d2d2d2" stroke-width="1.15" stroke-linecap="round" stroke-linejoin="round" /><path d="M9.4 1.8h4.8V6.6M14 2L7.4 8.6" fill="none" stroke="#d2d2d2" stroke-width="1.15" stroke-linecap="round" stroke-linejoin="round" /></svg>
<svg style="left:280.65px;top:62.35px;" width="12.10" height="12.10" viewBox="0 0 16 16"><path d="M6.80 2.84 L6.89 0.58 L9.11 0.58 L9.20 2.84 L10.80 3.50 L12.46 1.97 L14.03 3.54 L12.50 5.20 L13.16 6.80 L15.42 6.89 L15.42 9.11 L13.16 9.20 L12.50 10.80 L14.03 12.46 L12.46 14.03 L10.80 12.50 L9.20 13.16 L9.11 15.42 L6.89 15.42 L6.80 13.16 L5.20 12.50 L3.54 14.03 L1.97 12.46 L3.50 10.80 L2.84 9.20 L0.58 9.11 L0.58 6.89 L2.84 6.80 L3.50 5.20 L1.97 3.54 L3.54 1.97 L5.20 3.50Z" fill="none" stroke="#d2d2d2" stroke-width="1.1" stroke-linecap="round" stroke-linejoin="round" /><circle cx="8" cy="8" r="2.2" fill="none" stroke="#d2d2d2" stroke-width="1.1"/></svg>
<div style="left:88.20px;top:89.00px;width:205.80px;height:103.10px;background:#616161;border-radius:2.5px"></div>
<svg style="left:98.70px;top:100.00px;" width="9.20" height="9.20" viewBox="0 0 16 16"><path d="M3.2 5.6L8 10.4l4.8-4.8" fill="none" stroke="#e4e4e4" stroke-width="1.5" stroke-linecap="round" stroke-linejoin="round" /></svg>
<div class="t ui" style="top:97.87px;font-size:10.2px;line-height:13.26px;color:#f2f2f2;font-weight:700;left:114.40px;">Task</div>
<svg style="left:273.60px;top:99.80px;" width="8.80" height="8.80" viewBox="0 0 16 16"><path d="M3.5 3.5l9 9M12.5 3.5l-9 9" fill="none" stroke="#e2e2e2" stroke-width="1.6" stroke-linecap="round" stroke-linejoin="round" /></svg>
<div class="t ui" style="left:99.30px;top:116.45px;font-size:9.78px;line-height:12.30px;color:#dedede;letter-spacing:-0.109px;"><span style="font-size:10.35px">GPS</span>の現在地に地図の中心を移動させるア</div>
<div class="t ui" style="left:99.30px;top:128.75px;font-size:9.78px;line-height:12.30px;color:#dedede;letter-spacing:-0.013px;">イコンを画面右上に追加するように変更し</div>
<div class="t ui" style="left:99.30px;top:141.05px;font-size:9.78px;line-height:12.30px;color:#dedede;letter-spacing:0.031px;">てください</div>
<div class="t ui" style="top:158.10px;font-size:10.0px;line-height:13.00px;color:#f4f4f4;font-weight:700;left:99.30px;">Tokens:</div>
<svg style="left:139.80px;top:160.20px;" width="8.40" height="8.40" viewBox="0 0 16 16"><path d="M8 13.6V2.8M3.6 7L8 2.6 12.4 7" fill="none" stroke="#ececec" stroke-width="1.7" stroke-linecap="round" stroke-linejoin="round" /></svg>
<div class="t ui" style="top:158.10px;font-size:10.0px;line-height:13.00px;color:#ececec;left:151.20px;">0</div>
<svg style="left:160.80px;top:160.40px;" width="8.40" height="8.40" viewBox="0 0 16 16"><path d="M8 2.4v10.8M3.6 9L8 13.4 12.4 9" fill="none" stroke="#ececec" stroke-width="1.7" stroke-linecap="round" stroke-linejoin="round" /></svg>
<div class="t ui" style="top:158.10px;font-size:10.0px;line-height:13.00px;color:#ececec;left:171.80px;">0</div>
<div class="t ui" style="top:159.80px;font-size:7.7px;line-height:10.01px;color:#a8a8a8;font-weight:700;letter-spacing:0.3px;right:740.20px;">EXPORT</div>
<div class="t ui" style="top:173.70px;font-size:10.0px;line-height:13.00px;color:#f4f4f4;font-weight:700;left:99.30px;">Context:</div>
<div class="t ui" style="top:173.70px;font-size:10.0px;line-height:13.00px;color:#e8e8e8;left:144.20px;">-</div>
<div class="t ui" style="top:205.52px;font-size:10.35px;line-height:12.36px;color:#c9c9c9;letter-spacing:0.017px;left:89.60px;">I'll also include error handling for</div>
<div class="t ui" style="top:217.88px;font-size:10.35px;line-height:12.36px;color:#c9c9c9;letter-spacing:-0.049px;left:89.60px;">geolocation issues and ensure the map</div>
<div class="t ui" style="top:230.24px;font-size:10.35px;line-height:12.36px;color:#c9c9c9;letter-spacing:0.066px;left:89.60px;">initializes correctly with default coordinates</div>
<div class="t ui" style="top:242.60px;font-size:10.35px;line-height:12.36px;color:#c9c9c9;letter-spacing:-0.011px;left:89.60px;">centered in Japan, as per the user's time</div>
<div class="t ui" style="top:254.96px;font-size:10.35px;line-height:12.36px;color:#c9c9c9;letter-spacing:-0.077px;left:89.60px;">zone (Asia/Tokyo).</div>
<div class="t ui" style="top:276.42px;font-size:10.35px;line-height:12.36px;color:#c9c9c9;letter-spacing:0.025px;left:89.60px;">Finally, I'll test the code structure in my</div>
<div class="t ui" style="top:288.78px;font-size:10.35px;line-height:12.36px;color:#c9c9c9;letter-spacing:-0.064px;left:89.60px;">mind. The HTML includes Leaflet via CDN,</div>
<div class="t ui" style="top:301.14px;font-size:10.35px;line-height:12.36px;color:#c9c9c9;letter-spacing:-0.051px;left:89.60px;">the CSS styles the icon, and the JavaScript</div>
<div class="t ui" style="top:313.50px;font-size:10.35px;line-height:12.36px;color:#c9c9c9;letter-spacing:-0.012px;left:89.60px;">handles map initialization, geolocation, and</div>
<div class="t ui" style="top:325.86px;font-size:10.35px;line-height:12.36px;color:#c9c9c9;letter-spacing:0.06px;left:89.60px;">button functionality. This should meet the</div>
<div class="t ui" style="top:338.22px;font-size:10.35px;line-height:12.36px;color:#c9c9c9;letter-spacing:0.033px;left:89.60px;">user's requirements without needing</div>
<div class="t ui" style="top:350.58px;font-size:10.35px;line-height:12.36px;color:#c9c9c9;letter-spacing:0.004px;left:89.60px;">additional files or complex setup.</div>
<div class="t ui" style="top:372.22px;font-size:10.35px;line-height:12.36px;color:#c9c9c9;letter-spacing:-0.032px;left:89.60px;">I think this approach covers all necessary</div>
<div class="t ui" style="top:384.58px;font-size:10.35px;line-height:12.36px;color:#c9c9c9;letter-spacing:0.026px;left:89.60px;">steps: adding the HTML structure, styling,</div>
<div class="t ui" style="top:396.94px;font-size:10.35px;line-height:12.36px;color:#c9c9c9;letter-spacing:0.012px;left:89.60px;">and JavaScript functionality to achieve the</div>
<div class="t ui" style="top:409.30px;font-size:10.35px;line-height:12.36px;color:#c9c9c9;letter-spacing:-0.063px;left:89.60px;">desired GPS recentering feature.</div>
<div style="left:80px;top:425px;width:222px;height:138.8px;overflow:hidden"><div style="left:-80px;top:-425px;width:1024px;height:773px"><div class="t ui" style="left:114.30px;top:431.17px;font-size:9.78px;line-height:12.27px;color:#c9c9c9;letter-spacing:0.011px;">環境情報を見ると現在のディレクトリに</div>
<div class="t ui" style="left:114.30px;top:443.44px;font-size:9.78px;line-height:12.27px;color:#c9c9c9;letter-spacing:-0.062px;"><span style="font-size:10.35px">index.html</span>が存在し、<span style="font-size:10.35px">HTML</span>ファイルを</div>
<div class="t ui" style="left:114.30px;top:455.71px;font-size:9.78px;line-height:12.27px;color:#c9c9c9;letter-spacing:-0.019px;">開いています</div>
<div class="t ui" style="left:114.30px;top:467.98px;font-size:9.78px;line-height:12.27px;color:#c9c9c9;letter-spacing:-0.134px;">トラックバー右上に<span style="font-size:10.35px">GPS</span>アイコンを追加</div>
<div class="t ui" style="left:114.30px;top:480.25px;font-size:9.78px;line-height:12.27px;color:#c9c9c9;letter-spacing:-0.170px;">するためには<span style="font-size:10.35px">HTML/CSS/JavaScript</span>で</div>
<div class="t ui" style="left:114.30px;top:492.51px;font-size:9.78px;line-height:12.27px;color:#c9c9c9;letter-spacing:-0.003px;">の実装が必要です</div>
<div class="t ui" style="left:114.30px;top:504.79px;font-size:9.78px;line-height:12.27px;color:#c9c9c9;letter-spacing:0.045px;">現在地取得機能と地図中心移動機能を実</div>
<div class="t ui" style="left:114.30px;top:517.06px;font-size:9.78px;line-height:12.27px;color:#c9c9c9;letter-spacing:0.015px;">現するために<span style="font-size:10.35px">Leaflet.js</span>のような地図ラ</div>
<div class="t ui" style="left:114.30px;top:529.33px;font-size:9.78px;line-height:12.27px;color:#c9c9c9;letter-spacing:0.045px;">イブラリを使用するか、シンプルな<span style="font-size:10.35px">gps</span></div>
<div class="t ui" style="left:114.30px;top:541.60px;font-size:9.78px;line-height:12.27px;color:#c9c9c9;letter-spacing:0.041px;">位置表示にするか判断します</div>
<div class="t ui" style="left:114.30px;top:553.87px;font-size:9.78px;line-height:12.27px;color:#c9c9c9;letter-spacing:-0.009px;">今回はシンプルに<span style="font-size:10.35px">gps</span>アイコンと位置情</div>
</div></div><div style="left:89.60px;top:572.10px;width:13.80px;height:13.60px;background:#3c3c3c;border-radius:2.2px"></div>
<div class="t ui" style="top:572.10px;font-size:10.3px;line-height:13.39px;color:#cccccc;letter-spacing:-0.053px;left:110.00px;">Auto-approve:</div>
<div class="t ui" style="top:572.10px;font-size:10.3px;line-height:13.39px;color:#a6a6a6;letter-spacing:-0.306px;left:178.30px;">None</div>
<svg style="left:281.20px;top:573.60px;" width="10.40" height="10.40" viewBox="0 0 16 16"><path d="M5.8 3.2L10.6 8l-4.8 4.8" fill="none" stroke="#cccccc" stroke-width="1.6" stroke-linecap="round" stroke-linejoin="round" /></svg>
<div style="left:90.00px;top:596.20px;width:203.00px;height:18.80px;background:#242424;border-radius:2px"></div>
<svg style="left:185.80px;top:600.20px;" width="10.80" height="10.80" viewBox="0 0 16 16"><path d="M3.2 5.6L8 10.4l4.8-4.8" fill="none" stroke="#d8d8d8" stroke-width="1.7" stroke-linecap="round" stroke-linejoin="round" /></svg>
<div style="left:89.80px;top:622.60px;width:203.00px;height:70.20px;background:#313131;border:0.9px solid #2d66ad;box-sizing:border-box;border-radius:1.5px"></div>
<div class="t ui" style="top:631.57px;font-size:10.0px;line-height:11.45px;color:#737373;letter-spacing:-0.231px;left:98.00px;">Type a message...</div>
<div class="t ui" style="top:643.02px;font-size:10.0px;line-height:11.45px;color:#737373;letter-spacing:-0.137px;left:98.00px;">(@ to add context, / to switch modes, hold</div>
<div class="t ui" style="top:654.47px;font-size:10.0px;line-height:11.45px;color:#737373;letter-spacing:-0.107px;left:98.00px;">shift to drag in images)</div>
<svg style="left:100.70px;top:677.40px;" width="8.00" height="8.00" viewBox="0 0 16 16"><path d="M3.2 5.6L8 10.4l4.8-4.8" fill="none" stroke="#8e8e8e" stroke-width="2.4" stroke-linecap="round" stroke-linejoin="round" /></svg>
<div class="t ui" style="top:675.65px;font-size:9.0px;line-height:11.70px;color:#b4b4b4;left:111.40px;">Code</div>
<svg style="left:156.50px;top:677.40px;" width="8.00" height="8.00" viewBox="0 0 16 16"><path d="M3.2 5.6L8 10.4l4.8-4.8" fill="none" stroke="#8e8e8e" stroke-width="2.4" stroke-linecap="round" stroke-linejoin="round" /></svg>
<div class="t ui" style="top:675.65px;font-size:9.0px;line-height:11.70px;color:#b4b4b4;left:167.20px;">default</div>
<svg style="left:231.50px;top:674.20px;" width="12.00" height="12.00" viewBox="0 0 16 16"><path d="M6 2.6C6.4 5 7.2 5.8 9.6 6.2 7.2 6.6 6.4 7.4 6 9.8 5.6 7.4 4.8 6.6 2.4 6.2 4.8 5.8 5.6 5 6 2.6Z" fill="none" stroke="#a8a8a8" stroke-width="1.0" stroke-linecap="round" stroke-linejoin="round" /><path d="M11.6 8.6C11.8 10 12.4 10.6 13.8 10.8 12.4 11 11.8 11.6 11.6 13 11.4 11.6 10.8 11 9.4 10.8 10.8 10.6 11.4 10 11.6 8.6Z" fill="none" stroke="#a8a8a8" stroke-width="0.9" stroke-linecap="round" stroke-linejoin="round" /></svg>
<svg style="left:252.80px;top:674.40px;" width="12.00" height="12.00" viewBox="0 0 16 16"><path d="M1.8 5.2a.8.8 0 0 1 .8-.8H5L6 3h4l1 1.4h2.4a.8.8 0 0 1 .8.8v6.8a.8.8 0 0 1-.8.8H2.6a.8.8 0 0 1-.8-.8Z" fill="none" stroke="#a8a8a8" stroke-width="1.1" stroke-linecap="round" stroke-linejoin="round" /><circle cx="8" cy="8.4" r="2.3" fill="none" stroke="#a8a8a8" stroke-width="1.1"/></svg>
<svg style="left:274.20px;top:674.80px;" width="11.20" height="11.20" viewBox="0 0 16 16"><path d="M2.2 2.6L14 8 2.2 13.4 3.6 8Z" fill="none" stroke="#a8a8a8" stroke-width="1.1" stroke-linecap="round" stroke-linejoin="round" /><path d="M3.6 8H9" fill="none" stroke="#a8a8a8" stroke-width="1.1" stroke-linecap="round" stroke-linejoin="round" /></svg>
<div style="left:50.50px;top:37.70px;width:9.00px;height:9.00px;background:#ed6a5e;border-radius:50%"></div>
<div style="left:65.70px;top:37.70px;width:9.00px;height:9.00px;background:#f4bf4f;border-radius:50%"></div>
<div style="left:81.00px;top:37.70px;width:9.00px;height:9.00px;background:#61c554;border-radius:50%"></div>
<div style="left:53.50px;top:40.70px;width:3.00px;height:3.00px;background:#6e1a12;border-radius:50%"></div>
<svg style="left:296.00px;top:35.40px;" width="12.00" height="12.00" viewBox="0 0 16 16"><path d="M13.5 8H2.8M7 3.6L2.6 8 7 12.4" fill="none" stroke="#c4c4c4" stroke-width="1.2" stroke-linecap="round" stroke-linejoin="round" /></svg>
<svg style="left:316.00px;top:35.40px;" width="12.00" height="12.00" viewBox="0 0 16 16"><path d="M2.5 8h10.7M9 3.6L13.4 8 9 12.4" fill="none" stroke="#6a6a6a" stroke-width="1.2" stroke-linecap="round" stroke-linejoin="round" /></svg>
<div style="left:337.30px;top:32.90px;width:359.60px;height:17.40px;background:#242424;border:0.8px solid #3a3a3a;box-sizing:border-box;border-radius:4.5px"></div>
<svg style="left:496.80px;top:36.00px;" width="10.80" height="10.80" viewBox="0 0 16 16"><circle cx="9.6" cy="6.4" r="4.3" fill="none" stroke="#c0c0c0" stroke-width="1.1"/><path d="M6.5 9.5L1.8 14.2" fill="none" stroke="#c0c0c0" stroke-width="1.1" stroke-linecap="round" stroke-linejoin="round" /></svg>
<div class="t ui" style="top:35.26px;font-size:9.6px;line-height:12.48px;color:#cccccc;letter-spacing:-0.08px;left:511.40px;">ai_dev</div>
<svg style="left:705.40px;top:35.10px;" width="13.20" height="13.20" viewBox="0 0 16 16"><path d="M3.3 6.1C3.3 3.5 5.1 2.5 8 2.5S12.7 3.5 12.7 6.1C14.3 6.9 15 8.1 15 9.5 15 12.3 11.6 13.7 8 13.7S1 12.3 1 9.5C1 8.1 1.7 6.9 3.3 6.1Z" fill="none" stroke="#dcdcdc" stroke-width="1.9" stroke-linecap="round" stroke-linejoin="round" /><path d="M3.6 7.5C5.6 8.5 10.4 8.5 12.4 7.5" fill="none" stroke="#dcdcdc" stroke-width="1.7" stroke-linecap="round" stroke-linejoin="round" /><path d="M8 3.4V7.4" fill="none" stroke="#dcdcdc" stroke-width="1.5" stroke-linecap="round" stroke-linejoin="round" /><path d="M6.3 10.2v1.8M9.7 10.2v1.8" fill="none" stroke="#dcdcdc" stroke-width="1.5" stroke-linecap="round" stroke-linejoin="round" /></svg>
<svg style="left:720.80px;top:38.60px;" width="6.80" height="6.80" viewBox="0 0 16 16"><path d="M3.2 5.6L8 10.4l4.8-4.8" fill="none" stroke="#b8b8b8" stroke-width="1.8" stroke-linecap="round" stroke-linejoin="round" /></svg>
<svg style="left:899.75px;top:35.35px;" width="12.10" height="12.10" viewBox="0 0 16 16"><rect x="1.6" y="1.8" width="5.4" height="12.4" rx="0.5" fill="none" stroke="#d2d2d2" stroke-width="1.1"/><rect x="9.8" y="1.8" width="4.6" height="4.6" rx="0.5" fill="none" stroke="#d2d2d2" stroke-width="1.1"/><rect x="9.8" y="9.6" width="4.6" height="4.6" rx="0.5" fill="none" stroke="#d2d2d2" stroke-width="1.1"/></svg>
<svg style="left:919.45px;top:35.35px;" width="12.10" height="12.10" viewBox="0 0 16 16"><rect x="1.4" y="1.8" width="13.2" height="12.4" rx="0.6" fill="none" stroke="#d2d2d2" stroke-width="1.1"/><path d="M1.4 1.8H7.2V14.2H1.4Z" fill="#d2d2d2"/></svg>
<svg style="left:939.15px;top:35.35px;" width="12.10" height="12.10" viewBox="0 0 16 16"><rect x="1.4" y="1.8" width="13.2" height="12.4" rx="0.6" fill="none" stroke="#d2d2d2" stroke-width="1.1"/><path d="M1.4 10h13.2" fill="none" stroke="#d2d2d2" stroke-width="1.1" stroke-linecap="round" stroke-linejoin="round" /></svg>
<svg style="left:958.75px;top:35.35px;" width="12.10" height="12.10" viewBox="0 0 16 16"><rect x="1.4" y="1.8" width="13.2" height="12.4" rx="0.6" fill="none" stroke="#d2d2d2" stroke-width="1.1"/><path d="M9.4 1.8v12.4" fill="none" stroke="#d2d2d2" stroke-width="1.1" stroke-linecap="round" stroke-linejoin="round" /></svg>
<svg style="left:313.70px;top:62.20px;" width="12.00" height="12.00" viewBox="0 0 16 16"><path d="M6.6 4.9L3.6 8 6.6 11.1M9.4 4.9L12.4 8 9.4 11.1" fill="none" stroke="#e8914a" stroke-width="1.75" stroke-linecap="round" stroke-linejoin="round" /></svg>
<div class="t ui" style="top:61.70px;font-size:10.0px;line-height:13.00px;color:#ffffff;letter-spacing:0.125px;left:329.00px;">index.html: Original</div>
<div class="t ui" style="top:60.32px;font-size:11.2px;line-height:14.56px;color:#ffffff;font-weight:700;left:419.70px;font-family:"DejaVu Sans",sans-serif;">↔</div>
<div class="t ui" style="top:61.70px;font-size:10.0px;line-height:13.00px;color:#ffffff;letter-spacing:0.057px;left:432.40px;">Roo's Changes (Editable)</div>
<div style="left:554.90px;top:65.20px;width:6.20px;height:6.20px;background:#f0f0f0;border-radius:50%"></div>
<svg style="left:860.95px;top:62.95px;" width="12.10" height="12.10" viewBox="0 0 16 16"><path d="M8 13.6V2.8M3.6 7L8 2.6 12.4 7" fill="none" stroke="#d2d2d2" stroke-width="1.15" stroke-linecap="round" stroke-linejoin="round" /></svg>
<svg style="left:880.35px;top:62.95px;" width="12.10" height="12.10" viewBox="0 0 16 16"><path d="M8 2.4v10.8M3.6 9L8 13.4 12.4 9" fill="none" stroke="#d2d2d2" stroke-width="1.15" stroke-linecap="round" stroke-linejoin="round" /></svg>
<svg style="left:899.75px;top:62.95px;" width="12.10" height="12.10" viewBox="0 0 16 16"><path d="M7.2 8.4A3 3 0 0 1 7.2 2.4H12.6M7.2 2.4V13.6M10.2 2.4V13.6M5.6 13.6h6.2" fill="none" stroke="#d2d2d2" stroke-width="1.1" stroke-linecap="round" stroke-linejoin="round" /></svg>
<svg style="left:919.45px;top:62.95px;" width="12.10" height="12.10" viewBox="0 0 16 16"><path d="M1.8 4.2L5.6 2.8 10.4 4.2 14.2 2.8V11.8L10.4 13.2 5.6 11.8 1.8 13.2Z" fill="none" stroke="#d2d2d2" stroke-width="1.1" stroke-linecap="round" stroke-linejoin="round" /><path d="M5.6 2.8v9M10.4 4.2v9" fill="none" stroke="#d2d2d2" stroke-width="1.1" stroke-linecap="round" stroke-linejoin="round" /></svg>
<svg style="left:939.15px;top:62.95px;" width="12.10" height="12.10" viewBox="0 0 16 16"><rect x="2" y="2.4" width="12" height="11.2" rx="1" fill="none" stroke="#d2d2d2" stroke-width="1.1"/><path d="M8 2.4v11.2" fill="none" stroke="#d2d2d2" stroke-width="1.1" stroke-linecap="round" stroke-linejoin="round" /></svg>
<svg style="left:958.75px;top:62.95px;" width="12.10" height="12.10" viewBox="0 0 16 16"><circle cx="3.2" cy="8" r="0.9" fill="#d2d2d2" stroke="#d2d2d2" stroke-width="0"/><circle cx="8" cy="8" r="0.9" fill="#d2d2d2" stroke="#d2d2d2" stroke-width="0"/><circle cx="12.8" cy="8" r="0.9" fill="#d2d2d2" stroke="#d2d2d2" stroke-width="0"/></svg>
<svg style="left:317.80px;top:84.40px;" width="11.20" height="11.20" viewBox="0 0 16 16"><path d="M6.6 4.9L3.6 8 6.6 11.1M9.4 4.9L12.4 8 9.4 11.1" fill="none" stroke="#e8914a" stroke-width="1.75" stroke-linecap="round" stroke-linejoin="round" /></svg>
<div class="t ui" style="top:83.50px;font-size:10.0px;line-height:13.00px;color:#a9a9a9;letter-spacing:0.182px;left:333.40px;">index.html</div>
<svg style="left:383.20px;top:85.80px;" width="8.80" height="8.80" viewBox="0 0 16 16"><path d="M5.8 3.2L10.6 8l-4.8 4.8" fill="none" stroke="#8a8a8a" stroke-width="1.3" stroke-linecap="round" stroke-linejoin="round" /></svg>
<svg style="left:393.40px;top:84.40px;" width="11.20" height="11.20" viewBox="0 0 16 16"><path d="M8 2.6L14.8 5 8 7.6 1.2 5Z" fill="none" stroke="#6cb2f0" stroke-width="1.15" stroke-linecap="round" stroke-linejoin="round" /><path d="M1.2 5V10.8L8 13.6 14.8 10.8V5M8 7.6V13.6" fill="none" stroke="#6cb2f0" stroke-width="1.15" stroke-linecap="round" stroke-linejoin="round" /></svg>
<div class="t ui" style="top:83.50px;font-size:10.0px;line-height:13.00px;color:#a9a9a9;letter-spacing:0.348px;left:407.40px;">html</div>
<svg style="left:430.00px;top:85.80px;" width="8.80" height="8.80" viewBox="0 0 16 16"><path d="M5.8 3.2L10.6 8l-4.8 4.8" fill="none" stroke="#8a8a8a" stroke-width="1.3" stroke-linecap="round" stroke-linejoin="round" /></svg>
<svg style="left:439.80px;top:84.40px;" width="11.20" height="11.20" viewBox="0 0 16 16"><path d="M8 2.6L14.8 5 8 7.6 1.2 5Z" fill="none" stroke="#6cb2f0" stroke-width="1.15" stroke-linecap="round" stroke-linejoin="round" /><path d="M1.2 5V10.8L8 13.6 14.8 10.8V5M8 7.6V13.6" fill="none" stroke="#6cb2f0" stroke-width="1.15" stroke-linecap="round" stroke-linejoin="round" /></svg>
<div class="t ui" style="top:83.50px;font-size:10.0px;line-height:13.00px;color:#a9a9a9;letter-spacing:0.203px;left:454.00px;">body</div>
<svg style="left:479.80px;top:85.80px;" width="8.80" height="8.80" viewBox="0 0 16 16"><path d="M5.8 3.2L10.6 8l-4.8 4.8" fill="none" stroke="#8a8a8a" stroke-width="1.3" stroke-linecap="round" stroke-linejoin="round" /></svg>
<svg style="left:489.40px;top:84.40px;" width="11.20" height="11.20" viewBox="0 0 16 16"><path d="M8 2.6L14.8 5 8 7.6 1.2 5Z" fill="none" stroke="#6cb2f0" stroke-width="1.15" stroke-linecap="round" stroke-linejoin="round" /><path d="M1.2 5V10.8L8 13.6 14.8 10.8V5M8 7.6V13.6" fill="none" stroke="#6cb2f0" stroke-width="1.15" stroke-linecap="round" stroke-linejoin="round" /></svg>
<div class="t ui" style="top:83.50px;font-size:10.0px;line-height:13.00px;color:#a9a9a9;letter-spacing:0.332px;left:503.40px;">script</div>
<div style="left:41.00px;top:700.60px;width:942.00px;height:16.40px;background:#181818;"></div>
<div style="left:41.00px;top:700.40px;width:942.00px;height:0.80px;background:#2b2b2b;"></div>
<div style="left:41.00px;top:700.60px;width:27.00px;height:16.40px;background:#2f7ad2;"></div>
<svg style="left:49.20px;top:703.40px;" width="10.80" height="10.80" viewBox="0 0 16 16"><path d="M4.2 7.8L7.6 10.6 4.6 14" fill="none" stroke="#ffffff" stroke-width="1.3" stroke-linecap="round" stroke-linejoin="round" /><path d="M11.8 2L8.4 5.4 11.4 8.2" fill="none" stroke="#ffffff" stroke-width="1.3" stroke-linecap="round" stroke-linejoin="round" /></svg>
<svg style="left:73.60px;top:703.40px;" width="10.80" height="10.80" viewBox="0 0 16 16"><circle cx="8" cy="8" r="6" fill="none" stroke="#d0d0d0" stroke-width="1.1"/><path d="M5.6 5.6l4.8 4.8M10.4 5.6l-4.8 4.8" fill="none" stroke="#d0d0d0" stroke-width="1.1" stroke-linecap="round" stroke-linejoin="round" /></svg>
<div class="t ui" style="top:702.73px;font-size:9.5px;line-height:12.35px;color:#e0e0e0;left:86.80px;-webkit-text-stroke:0.3px;">0</div>
<svg style="left:95.20px;top:703.40px;" width="10.80" height="10.80" viewBox="0 0 16 16"><path d="M8 2.2L14.4 13.6H1.6Z" fill="none" stroke="#d0d0d0" stroke-width="1.1" stroke-linecap="round" stroke-linejoin="round" /><path d="M8 6.4v3.6" fill="none" stroke="#d0d0d0" stroke-width="1.1" stroke-linecap="round" stroke-linejoin="round" /><circle cx="8" cy="11.7" r="0.5" fill="#d0d0d0" stroke="#d0d0d0" stroke-width="0"/></svg>
<div class="t ui" style="top:702.73px;font-size:9.5px;line-height:12.35px;color:#e0e0e0;left:108.20px;-webkit-text-stroke:0.3px;">0</div>
<svg style="left:125.60px;top:703.20px;" width="10.80" height="10.80" viewBox="0 0 16 16"><path d="M8 6.2L5.4 14M8 6.2L10.6 14M6.4 11.2h3.2" fill="none" stroke="#d0d0d0" stroke-width="1.0" stroke-linecap="round" stroke-linejoin="round" /><circle cx="8" cy="5.4" r="1.1" fill="none" stroke="#d0d0d0" stroke-width="0.9"/><path d="M4.8 2.8a4.4 4.4 0 0 0 0 5.4M11.2 2.8a4.4 4.4 0 0 1 0 5.4M2.8 1.4a7 7 0 0 0 0 8.2M13.2 1.4a7 7 0 0 1 0 8.2" fill="none" stroke="#d0d0d0" stroke-width="0.9" stroke-linecap="round" stroke-linejoin="round" /></svg>
<div class="t ui" style="top:702.73px;font-size:9.5px;line-height:12.35px;color:#e0e0e0;left:139.40px;-webkit-text-stroke:0.3px;">0</div>
<div class="t ui" style="left:684.50px;top:702.56px;font-size:9.3px;line-height:12.09px;color:#d0d0d0;letter-spacing:-0.082px;">行<span style="font-size:10.10px"> 64</span>、列<span style="font-size:10.10px"> 1 (781 </span>個選択<span style="font-size:10.10px">)</span></div>
<div class="t ui" style="left:803.50px;top:702.56px;font-size:9.3px;line-height:12.09px;color:#d0d0d0;letter-spacing:-0.402px;">スペース<span style="font-size:10.10px">: 4</span></div>
<div class="t ui" style="top:702.30px;font-size:9.7px;line-height:12.61px;color:#d0d0d0;letter-spacing:-0.091px;left:860.50px;">UTF-8</div>
<div class="t ui" style="top:702.30px;font-size:9.7px;line-height:12.61px;color:#d0d0d0;letter-spacing:-0.406px;left:899.00px;">LF</div>
<div class="t ui" style="top:702.30px;font-size:9.7px;line-height:12.61px;color:#d0d0d0;letter-spacing:-0.344px;left:922.00px;">HTML</div>
<svg style="left:960.00px;top:702.60px;" width="12.00" height="12.00" viewBox="0 0 16 16"><path d="M3.4 11.4C4.4 10.4 4.4 9 4.4 7.2A3.6 3.6 0 0 1 11.6 7.2C11.6 9 11.6 10.4 12.6 11.4Z" fill="none" stroke="#d0d0d0" stroke-width="1.1" stroke-linecap="round" stroke-linejoin="round" /><path d="M6.8 13.2a1.3 1.3 0 0 0 2.4 0" fill="none" stroke="#d0d0d0" stroke-width="1.1" stroke-linecap="round" stroke-linejoin="round" /></svg>
</div></div>
</body></html>
